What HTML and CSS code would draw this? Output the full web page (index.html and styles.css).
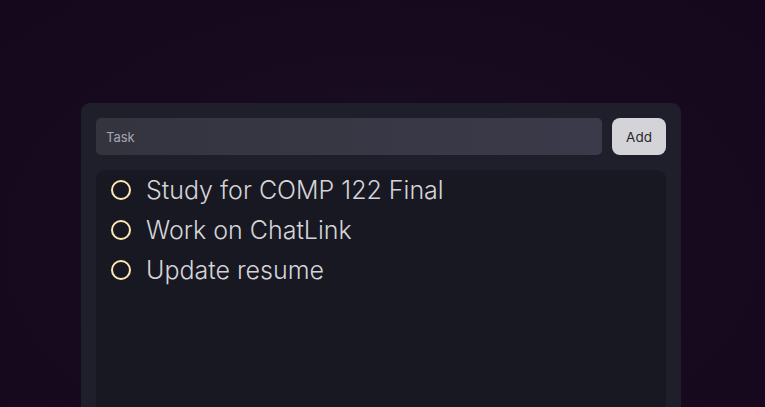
FILE: index.html
```html
<!DOCTYPE html>
<html>
<head>
<meta charset="utf-8">
<link rel="stylesheet" href="styles.css">
</head>
<body>
<div class="card">
  <div class="form">
    <input class="task-input" type="text" placeholder="Task">
    <button class="add-btn">Add</button>
  </div>
  <ul class="list">
    <li class="item"><span class="circle"></span><span class="label">Study for COMP 122 Final</span></li>
    <li class="item"><span class="circle"></span><span class="label">Work on ChatLink</span></li>
    <li class="item"><span class="circle"></span><span class="label">Update resume</span></li>
  </ul>
</div>
</body>
</html>
```
FILE: styles.css
```css
html, body {
  margin: 0;
  height: 100%;
}
body {
  background: radial-gradient(ellipse at 50% 60%, #1b1024 0%, #170a1f 60%, #15081c 100%);
  font-family: Inter, "Noto Sans", sans-serif;
  overflow: hidden;
}
.card {
  width: 570px;
  margin: 103px 0 0 81px;
  padding: 15px;
  background: #1f1f2c;
  border-radius: 9px;
  height: 400px;
}
.form {
  display: flex;
  gap: 10px;
}
.task-input {
  flex: 1;
  height: 37px;
  box-sizing: border-box;
  border: none;
  outline: none;
  border-radius: 5px;
  background: linear-gradient(90deg, #34343f, #3b3a4a);
  padding: 0 10px;
  font-family: Inter, sans-serif;
  font-size: 13px;
  color: #d4d4d8;
}
.task-input::placeholder {
  color: #a6a6b4;
}
.add-btn {
  width: 54px;
  height: 37px;
  border: none;
  border-radius: 8px;
  background: #d4d4d8;
  color: #27272a;
  font-family: Inter, sans-serif;
  font-size: 13.5px;
  padding: 0;
}
.list {
  list-style: none;
  margin: 15px 0 0;
  padding: 0 15px;
  background: #181822;
  border-radius: 9px;
  height: 300px;
}
.item {
  display: flex;
  align-items: center;
  height: 40px;
  gap: 15px;
}
.circle {
  width: 16px;
  height: 16px;
  border: 2px solid #fde9b5;
  border-radius: 50%;
  flex: none;
}
.label {
  font-size: 25px;
  font-weight: 300;
  color: #d4d4d8;
}
```
